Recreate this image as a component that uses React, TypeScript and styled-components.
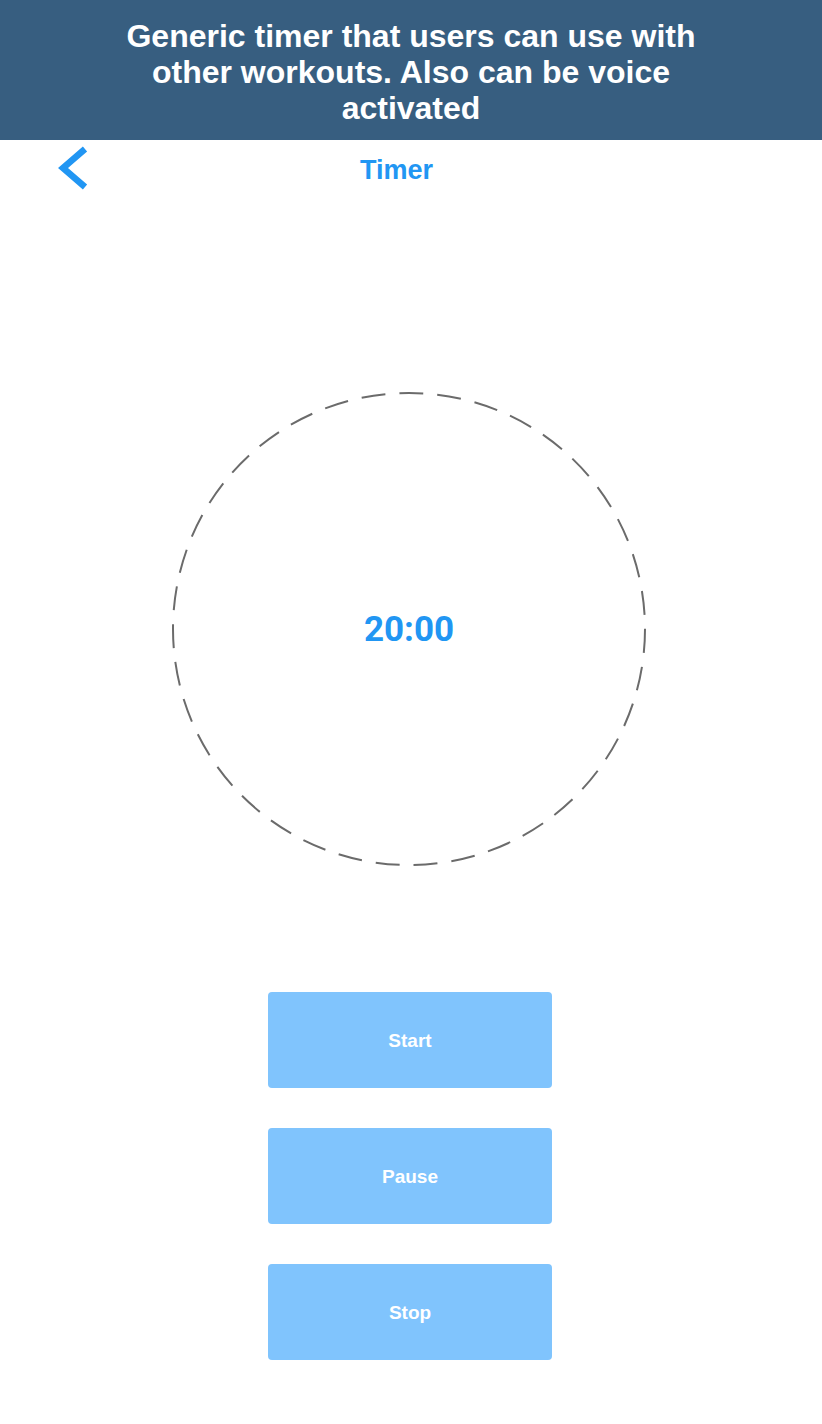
import styled, { createGlobalStyle } from 'styled-components';

const GlobalStyle = createGlobalStyle`
  html, body {
    margin: 0;
    padding: 0;
    background: #ffffff;
    font-family: "Liberation Sans", Arial, sans-serif;
  }
`;

const Page = styled.div`
  width: 822px;
  min-height: 1424px;
  display: flex;
  flex-direction: column;
  align-items: center;
`;

const Banner = styled.header`
  width: 100%;
  height: 140px;
  background: #375e80;
  display: flex;
  justify-content: center;
  align-items: center;
  box-sizing: border-box;
  padding: 4px 108px 0;
`;

const BannerText = styled.h1`
  margin: 0;
  color: #ffffff;
  font-size: 32px;
  line-height: 36px;
  font-weight: bold;
  text-align: center;
`;

const NavBar = styled.nav`
  width: 100%;
  height: 60px;
  display: flex;
  align-items: center;
  box-sizing: border-box;
  padding: 0 0 4px 55px;
`;

const BackButton = styled.button`
  border: none;
  background: none;
  padding: 0;
  width: 34px;
  height: 44px;
  display: flex;
  align-items: center;
  cursor: pointer;
`;

const NavTitle = styled.div`
  flex: 1;
  text-align: center;
  margin-right: 118px;
  padding-top: 4px;
  color: #2196f3;
  font-size: 27px;
  font-weight: bold;
`;

const Dial = styled.div`
  position: relative;
  width: 474px;
  height: 474px;
  margin-top: 192px;
  margin-left: -4px;
  display: flex;
  justify-content: center;
  align-items: center;
`;

const DialRing = styled.svg`
  position: absolute;
  inset: 0;
`;

const TimeText = styled.div`
  position: relative;
  color: #2196f3;
  font-family: Roboto, "Liberation Sans", sans-serif;
  font-size: 35px;
  font-weight: bold;
`;

const Controls = styled.div`
  margin-top: 126px;
  margin-left: -2px;
  display: flex;
  flex-direction: column;
  gap: 40px;
`;

const ControlButton = styled.button`
  width: 284px;
  height: 96px;
  padding-top: 2px;
  border: none;
  border-radius: 4px;
  background: #80c4fd;
  color: #ffffff;
  font-family: "Liberation Sans", Arial, sans-serif;
  font-size: 19px;
  font-weight: bold;
  cursor: pointer;
`;

const App = () => {
  return (
    <>
      <GlobalStyle />
      <Page>
        <Banner>
          <BannerText>
            Generic timer that users can use with other workouts. Also can be voice activated
          </BannerText>
        </Banner>
        <NavBar>
          <BackButton aria-label="Back">
            <svg width="34" height="44" viewBox="0 0 34 44">
              <path d="M30 3 L8 22 L30 41" fill="none" stroke="#2196f3" strokeWidth="6.5" />
            </svg>
          </BackButton>
          <NavTitle>Timer</NavTitle>
        </NavBar>
        <Dial>
          <DialRing width="474" height="474" viewBox="0 0 474 474">
            <circle
              cx="237"
              cy="237"
              r="236"
              fill="none"
              stroke="#6b6b6b"
              strokeWidth="2"
              strokeDasharray="24 14"
            />
          </DialRing>
          <TimeText>20:00</TimeText>
        </Dial>
        <Controls>
          <ControlButton>Start</ControlButton>
          <ControlButton>Pause</ControlButton>
          <ControlButton>Stop</ControlButton>
        </Controls>
      </Page>
    </>
  );
};

export default App;
